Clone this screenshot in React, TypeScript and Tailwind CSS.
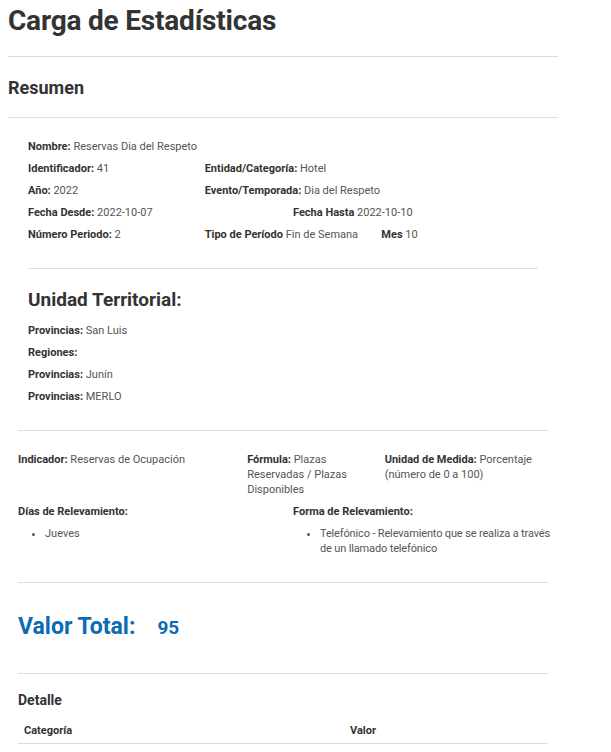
import React from "react";

const F = { fontFamily: "Roboto, 'Open Sans', sans-serif" };

function KV({ k, v, className = "" }: { k: string; v?: string; className?: string }) {
  return (
    <div className={"leading-[22px] " + className}>
      <span className="font-bold text-[#333]">{k}</span>
      {v !== undefined && <span className="text-[#555]"> {v}</span>}
    </div>
  );
}

export default function App() {
  return (
    <div style={F} className="bg-white w-[611px] h-[752px] overflow-hidden text-[#333]">
      <div className="px-2 w-[566px]">
        <h1 className="text-[28px] font-bold leading-[40px] pt-[1px] tracking-[-0.2px]">Carga de Estadísticas</h1>
        <hr className="mt-[15px] border-t border-[#ddd]" />
        <h2 className="text-[18px] font-bold leading-[24px] mt-[19px]">Resumen</h2>
        <hr className="mt-[17px] border-t border-[#ddd]" />

        <div className="px-5 text-[11px] mt-[18px]">
          <div className="grid grid-cols-12 -mx-[10px]">
            <KV className="col-span-12 px-[10px]" k="Nombre:" v="Reservas Dia del Respeto" />
            <KV className="col-span-4 px-[10px]" k="Identificador:" v="41" />
            <KV className="col-span-8 px-[10px]" k="Entidad/Categoría:" v="Hotel" />
            <KV className="col-span-4 px-[10px]" k="Año:" v="2022" />
            <KV className="col-span-8 px-[10px]" k="Evento/Temporada:" v="Dia del Respeto" />
            <KV className="col-span-6 px-[10px]" k="Fecha Desde:" v="2022-10-07" />
            <KV className="col-span-6 px-[10px]" k="Fecha Hasta" v="2022-10-10" />
            <KV className="col-span-4 px-[10px]" k="Número Periodo:" v="2" />
            <KV className="col-span-4 px-[10px]" k="Tipo de Período" v="Fin de Semana" />
            <KV className="col-span-4 px-[10px]" k="Mes" v="10" />
          </div>
          <hr className="mt-[22px] border-t border-[#ddd]" />
          <h3 className="text-[19px] font-bold leading-[26px] mt-[18px]">Unidad Territorial:</h3>
          <div className="mt-[7px]">
            <KV k="Provincias:" v="San Luis" />
            <KV k="Regiones:" />
            <KV k="Provincias:" v="Junín" />
            <KV k="Provincias:" v="MERLO" />
          </div>
        </div>

        <div className="px-[10px] text-[11px]">
          <hr className="mt-[22px] border-t border-[#ddd]" />
          <div className="grid grid-cols-12 -mx-[10px] mt-[21px] leading-[15px] text-[#555]">
            <div className="col-span-5 px-[10px]">
              <b className="font-bold text-[#333]">Indicador:</b> Reservas de Ocupación
            </div>
            <div className="col-span-3 px-[10px]">
              <b className="font-bold text-[#333]">Fórmula:</b> Plazas Reservadas / Plazas Disponibles
            </div>
            <div className="col-span-4 px-[10px]">
              <b className="font-bold text-[#333]">Unidad de Medida:</b> Porcentaje (número de 0 a 100)
            </div>
          </div>
          <div className="grid grid-cols-12 -mx-[10px] mt-[7px] leading-[15px]">
            <div className="col-span-6 px-[10px]">
              <div className="font-bold">Días de Relevamiento:</div>
              <ul className="list-disc pl-[27px] mt-[7px] text-[#555]">
                <li>Jueves</li>
              </ul>
            </div>
            <div className="col-span-6 pl-[10px]">
              <div className="font-bold">Forma de Relevamiento:</div>
              <ul className="list-disc pl-[27px] mt-[7px] text-[#555] tracking-[-0.15px]">
                <li>Telefónico - Relevamiento que se realiza a través de un llamado telefónico</li>
              </ul>
            </div>
          </div>
          <hr className="mt-[26px] border-t border-[#ddd]" />
          <div className="mt-[29px] flex items-baseline text-[#0b6bb5] font-bold">
            <span className="text-[23px] leading-[30px]">Valor Total:</span>
            <span className="text-[19px] leading-[30px] ml-[22px]">95</span>
          </div>
          <hr className="mt-[30px] border-t border-[#ddd]" />
          <h4 className="text-[14px] font-bold leading-[20px] mt-[16px]">Detalle</h4>
          <div className="grid grid-cols-[326px_1fr] mt-[13px] border-b border-[#ddd] pb-[4px] px-[6px] font-bold leading-[16px]">
            <span>Categoría</span>
            <span>Valor</span>
          </div>
        </div>
      </div>
    </div>
  );
}
